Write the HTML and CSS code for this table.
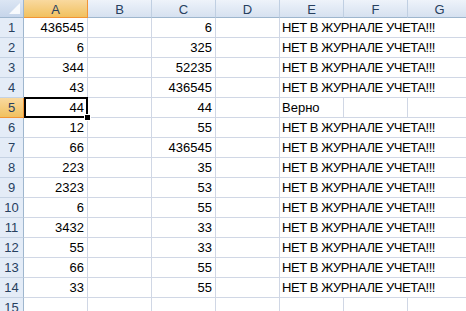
FILE: index.html
```html
<!DOCTYPE html>
<html>
<head>
<meta charset="utf-8">
<link rel="stylesheet" href="styles.css">
</head>
<body>
<div class="sheet">
  <div class="corner"><span class="tri"></span></div>
  <div class="ch sel">A</div><div class="ch">B</div><div class="ch">C</div><div class="ch">D</div><div class="ch">E</div><div class="ch">F</div><div class="ch">G</div>

  <div class="rh">1</div><div class="c n">436545</div><div class="c"></div><div class="c n">6</div><div class="c"></div><div class="c t">НЕТ В ЖУРНАЛЕ УЧЕТА!!!</div>
  <div class="rh">2</div><div class="c n">6</div><div class="c"></div><div class="c n">325</div><div class="c"></div><div class="c t">НЕТ В ЖУРНАЛЕ УЧЕТА!!!</div>
  <div class="rh">3</div><div class="c n">344</div><div class="c"></div><div class="c n">52235</div><div class="c"></div><div class="c t">НЕТ В ЖУРНАЛЕ УЧЕТА!!!</div>
  <div class="rh">4</div><div class="c n">43</div><div class="c"></div><div class="c n">436545</div><div class="c"></div><div class="c t">НЕТ В ЖУРНАЛЕ УЧЕТА!!!</div>
  <div class="rh sel">5</div><div class="c n active">44<span class="handle"></span></div><div class="c"></div><div class="c n">44</div><div class="c"></div><div class="c w">Верно</div><div class="c"></div><div class="c"></div>
  <div class="rh">6</div><div class="c n">12</div><div class="c"></div><div class="c n">55</div><div class="c"></div><div class="c t">НЕТ В ЖУРНАЛЕ УЧЕТА!!!</div>
  <div class="rh">7</div><div class="c n">66</div><div class="c"></div><div class="c n">436545</div><div class="c"></div><div class="c t">НЕТ В ЖУРНАЛЕ УЧЕТА!!!</div>
  <div class="rh">8</div><div class="c n">223</div><div class="c"></div><div class="c n">35</div><div class="c"></div><div class="c t">НЕТ В ЖУРНАЛЕ УЧЕТА!!!</div>
  <div class="rh">9</div><div class="c n">2323</div><div class="c"></div><div class="c n">53</div><div class="c"></div><div class="c t">НЕТ В ЖУРНАЛЕ УЧЕТА!!!</div>
  <div class="rh">10</div><div class="c n">6</div><div class="c"></div><div class="c n">55</div><div class="c"></div><div class="c t">НЕТ В ЖУРНАЛЕ УЧЕТА!!!</div>
  <div class="rh">11</div><div class="c n">3432</div><div class="c"></div><div class="c n">33</div><div class="c"></div><div class="c t">НЕТ В ЖУРНАЛЕ УЧЕТА!!!</div>
  <div class="rh">12</div><div class="c n">55</div><div class="c"></div><div class="c n">33</div><div class="c"></div><div class="c t">НЕТ В ЖУРНАЛЕ УЧЕТА!!!</div>
  <div class="rh">13</div><div class="c n">66</div><div class="c"></div><div class="c n">55</div><div class="c"></div><div class="c t">НЕТ В ЖУРНАЛЕ УЧЕТА!!!</div>
  <div class="rh">14</div><div class="c n">33</div><div class="c"></div><div class="c n">55</div><div class="c"></div><div class="c t">НЕТ В ЖУРНАЛЕ УЧЕТА!!!</div>
  <div class="rh">15</div><div class="c"></div><div class="c"></div><div class="c"></div><div class="c"></div><div class="c"></div><div class="c"></div><div class="c"></div>
</div>
</body>
</html>
```

FILE: styles.css
```css
html, body {
  margin: 0;
  padding: 0;
  background: #ffffff;
  overflow: hidden;
}
.sheet {
  display: grid;
  grid-template-columns: 24px repeat(7, 64px);
  grid-template-rows: 18px repeat(15, 20px);
  width: 472px;
  font-family: "Liberation Sans", Arial, sans-serif;
  font-size: 13px;
  color: #000;
}
.corner, .ch, .rh, .c {
  box-sizing: border-box;
  border-right: 1px solid #d0d7e5;
  border-bottom: 1px solid #d0d7e5;
  white-space: nowrap;
}
.corner {
  background: linear-gradient(#dce6f4, #c6d5ea);
  border-right: 1px solid #9eb6ce;
  border-bottom: 1px solid #9eb6ce;
  position: relative;
}
.tri {
  position: absolute;
  right: 3px;
  bottom: 3px;
  width: 0;
  height: 0;
  border-left: 11px solid transparent;
  border-bottom: 11px solid #ffffff;
  opacity: 0.85;
}
.ch {
  background: linear-gradient(#eef3fa, #d6e1f0);
  border-right: 1px solid #c0cfe2;
  border-bottom: 1px solid #9eb6ce;
  display: flex;
  align-items: center;
  justify-content: center;
  font-size: 13px;
  color: #27405f;
  padding-top: 1px;
}
.ch.sel {
  background: linear-gradient(#f9d99f, #f1c15f);
  border-right: 1px solid #f29436;
  border-bottom: 1px solid #f29436;
}
.rh {
  background: #e4ecf7;
  border-right: 1px solid #9eb6ce;
  border-bottom: 1px solid #c5d2e3;
  display: flex;
  align-items: center;
  justify-content: center;
  font-size: 13px;
  color: #27405f;
}
.rh.sel {
  background: linear-gradient(#f9d99f, #f1c15f);
  border-bottom: 1px solid #f29436;
  border-right: 1px solid #f29436;
}
.c {
  display: flex;
  align-items: center;
  padding: 0 3px 0 2px;
}
.c.n {
  justify-content: flex-end;
}
.c.t, .c.w {
  justify-content: flex-start;
}
.c.t {
  grid-column: span 3;
  letter-spacing: -0.45px;
}
.active {
  position: relative;
}
.active::after {
  content: "";
  position: absolute;
  left: 0;
  top: -1px;
  right: -1px;
  bottom: -1px;
  border: 2px solid #000;
}
.handle {
  position: absolute;
  right: -4px;
  bottom: -4px;
  width: 5px;
  height: 5px;
  background: #000;
  border: 1px solid #fff;
  z-index: 2;
}
```
